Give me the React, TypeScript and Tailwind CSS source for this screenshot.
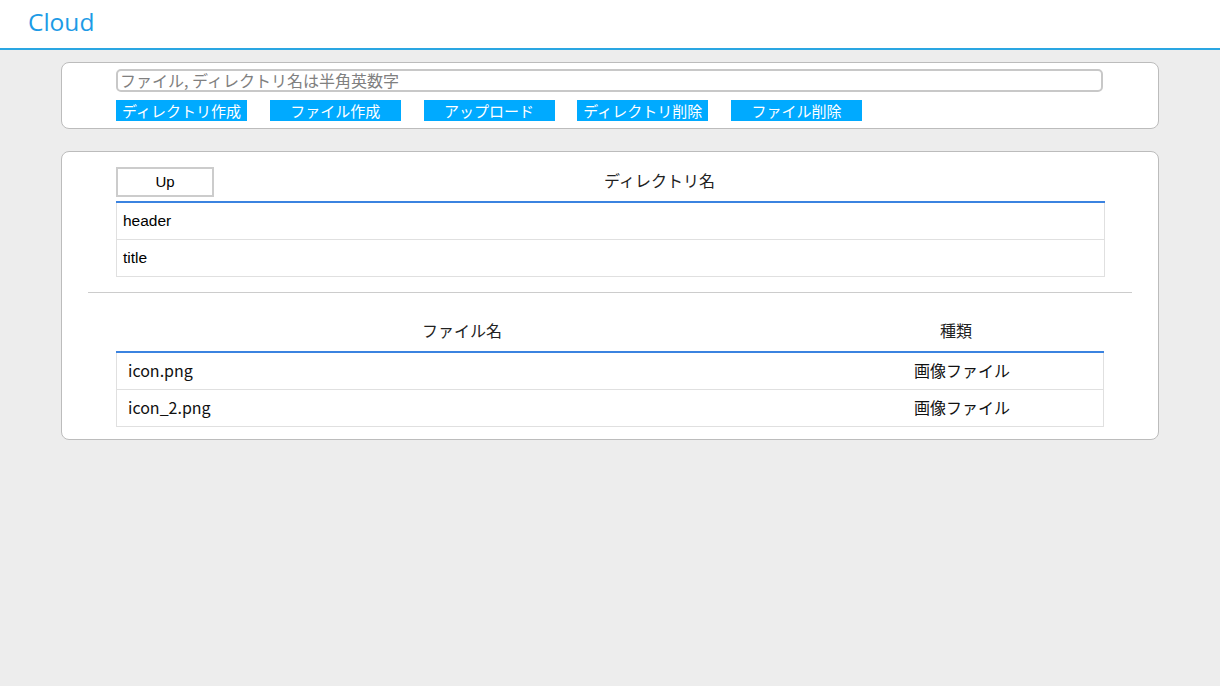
import { useState } from 'react';

const jp = "font-['Noto_Sans_CJK_JP','Noto_Sans',sans-serif]";

const actions = ['ディレクトリ作成', 'ファイル作成', 'アップロード', 'ディレクトリ削除', 'ファイル削除'];
const dirs = ['header', 'title'];
const files = [
  { name: 'icon.png', kind: '画像ファイル' },
  { name: 'icon_2.png', kind: '画像ファイル' },
];

export default function App() {
  const [name, setName] = useState('');

  return (
    <div className={`min-h-[686px] bg-[#ededed] ${jp}`}>
      {/* Header */}
      <header className="h-[50px] bg-white border-b-2 border-[#2aa6e2] flex items-center pl-[28px]">
        <span className="text-[24.5px] leading-none text-[#1d9be6] font-['Open_Sans',sans-serif] -mt-[3px]">Cloud</span>
      </header>

      {/* Toolbar panel */}
      <section className="mx-[61px] mt-[12px] bg-white border border-[#bcbcbc] rounded-[8px] pl-[54px] pr-[55px] pt-[5px] pb-[7px]">
        <input
          value={name}
          onChange={(e) => setName(e.target.value)}
          placeholder="ファイル, ディレクトリ名は半角英数字"
          className="w-full h-[23px] border-2 border-[#c8c8c8] rounded-[5px] px-[2px] text-[16px] leading-none text-[#333] placeholder:text-[#808080] outline-none"
        />
        <div className="flex gap-[22.75px] mt-[8px]">
          {actions.map((a) => (
            <button
              key={a}
              className="w-[131px] h-[21px] bg-[#00aaff] text-white text-[15px] leading-none flex items-center justify-center"
            >
              {a}
            </button>
          ))}
        </div>
      </section>

      {/* Browser panel */}
      <section className="mx-[61px] mt-[22px] bg-white border border-[#bcbcbc] rounded-[8px] pt-[15px] pb-[12px]">
        <div className="pl-[54px] pr-[53px]">
          <div className="flex items-center">
            <button className="w-[98px] h-[30px] border-2 border-[#cccccc] text-[15px] text-black font-['Liberation_Sans',sans-serif]">
              Up
            </button>
            <div className="flex-1 text-center text-[16px] text-[#222] -mt-[4px]">ディレクトリ名</div>
          </div>
          <div className="mt-[4px] border-t-2 border-[#3b83e0]">
            {dirs.map((d) => (
              <div
                key={d}
                className="h-[37px] border-x border-b border-[#e0e0e0] flex items-center pl-[6px] text-[15.5px] text-black font-['Liberation_Sans',sans-serif]"
              >
                {d}
              </div>
            ))}
          </div>
        </div>

        <hr className="mx-[26px] mt-[15px] border-t border-[#cccccc]" />

        <div className="pl-[54px] pr-[54px] mt-[25px]">
          <div className="flex text-[16px] text-[#222]">
            <div className="w-[692px] text-center">ファイル名</div>
            <div className="flex-1 text-center">種類</div>
          </div>
          <div className="mt-[9px] border-t-2 border-[#3b83e0]">
            {files.map((f) => (
              <div
                key={f.name}
                className="h-[37px] border-x border-b border-[#e0e0e0] flex items-center text-[16px] text-[#111]"
              >
                <div className="w-[692px] pl-[11px] -mt-[3px]">{f.name}</div>
                <div className="flex-1 text-center pl-[12px] -mt-[3px]">{f.kind}</div>
              </div>
            ))}
          </div>
        </div>
      </section>
    </div>
  );
}
